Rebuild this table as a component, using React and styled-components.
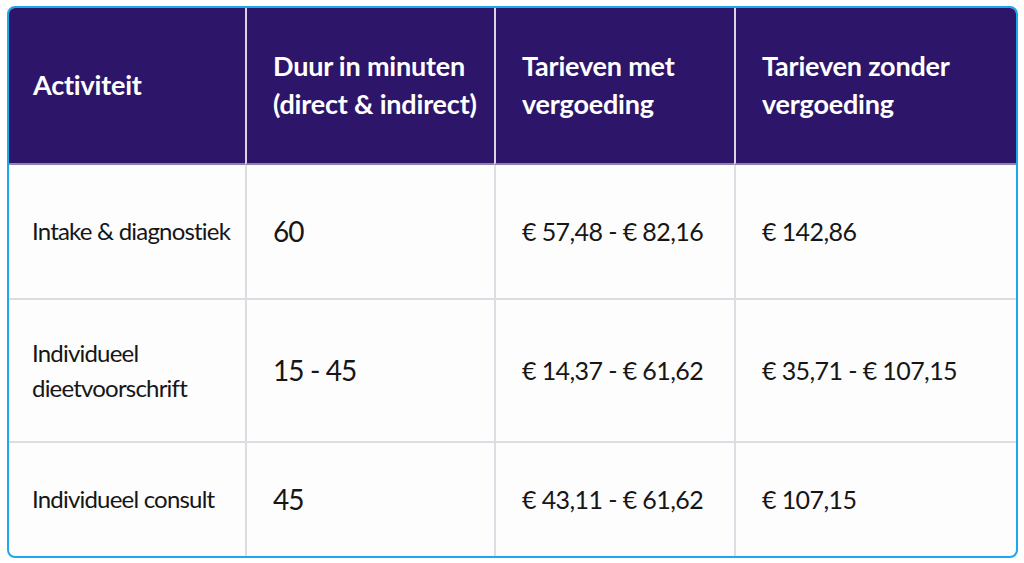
import styled, { createGlobalStyle } from 'styled-components';

const GlobalStyle = createGlobalStyle`
  html, body {
    margin: 0;
    padding: 0;
    background: #ffffff;
  }
  body {
    font-family: Lato, "Open Sans", sans-serif;
  }
`;

const Page = styled.div`
  width: 1024px;
  height: 563px;
  box-sizing: border-box;
  padding: 6px 6px 5px 7px;
`;

const Table = styled.div`
  box-sizing: border-box;
  height: 100%;
  border: 2px solid #1da8ee;
  border-radius: 8px;
  overflow: hidden;
  display: grid;
  grid-template-columns: 236px 249px 240px 1fr;
  grid-template-rows: 157px 135px 143px 1fr;
  background: #fdfdfd;
`;

const HeadCell = styled.div`
  background: #2d166a;
  color: #ffffff;
  font-weight: 700;
  font-size: 27px;
  line-height: 38px;
  letter-spacing: -0.2px;
  display: flex;
  align-items: center;
  padding-left: ${(p) => (p.$first ? '24px' : '26px')};
  padding-bottom: 2px;
  border-left: ${(p) => (p.$first ? 'none' : '2px solid #d9d4e6')};
  border-bottom: 2px solid #8c83b0;
`;

const sizes = {
  label: { size: '24px', spacing: '-0.8px' },
  num: { size: '28px', spacing: '-0.9px' },
  price: { size: '25px', spacing: '-0.6px' },
};

const Cell = styled.div`
  color: #161616;
  font-size: ${(p) => sizes[p.$kind].size};
  letter-spacing: ${(p) => sizes[p.$kind].spacing};
  line-height: 35px;
  display: flex;
  align-items: center;
  padding-left: ${(p) => (p.$kind === 'label' ? '23px' : '26px')};
  padding-bottom: ${(p) => (p.$kind === 'label' ? '2px' : '0')};
  border-left: ${(p) => (p.$kind === 'label' ? 'none' : '2px solid #dcdce3')};
  border-bottom: ${(p) => (p.$last ? 'none' : '2px solid #dcdce3')};
`;

const headers = [
  ['Activiteit'],
  ['Duur in minuten', '(direct & indirect)'],
  ['Tarieven met', 'vergoeding'],
  ['Tarieven zonder', 'vergoeding'],
];

const rows = [
  [['Intake & diagnostiek'], '60', '€ 57,48 - € 82,16', '€ 142,86'],
  [['Individueel', 'dieetvoorschrift'], '15 - 45', '€ 14,37 - € 61,62', '€ 35,71 - € 107,15'],
  [['Individueel consult'], '45', '€ 43,11 - € 61,62', '€ 107,15'],
];

const Lines = ({ lines }) => (
  <div>
    {lines.map((l) => (
      <div key={l}>{l}</div>
    ))}
  </div>
);

export default function App() {
  return (
    <>
      <GlobalStyle />
      <Page>
        <Table>
          {headers.map((h, i) => (
            <HeadCell key={i} $first={i === 0}>
              <Lines lines={h} />
            </HeadCell>
          ))}
          {rows.flatMap((r, ri) => {
            const last = ri === rows.length - 1;
            return [
              <Cell key={`${ri}-0`} $kind="label" $last={last}>
                <Lines lines={r[0]} />
              </Cell>,
              <Cell key={`${ri}-1`} $kind="num" $last={last}>
                {r[1]}
              </Cell>,
              <Cell key={`${ri}-2`} $kind="price" $last={last}>
                {r[2]}
              </Cell>,
              <Cell key={`${ri}-3`} $kind="price" $last={last}>
                {r[3]}
              </Cell>,
            ];
          })}
        </Table>
      </Page>
    </>
  );
}
